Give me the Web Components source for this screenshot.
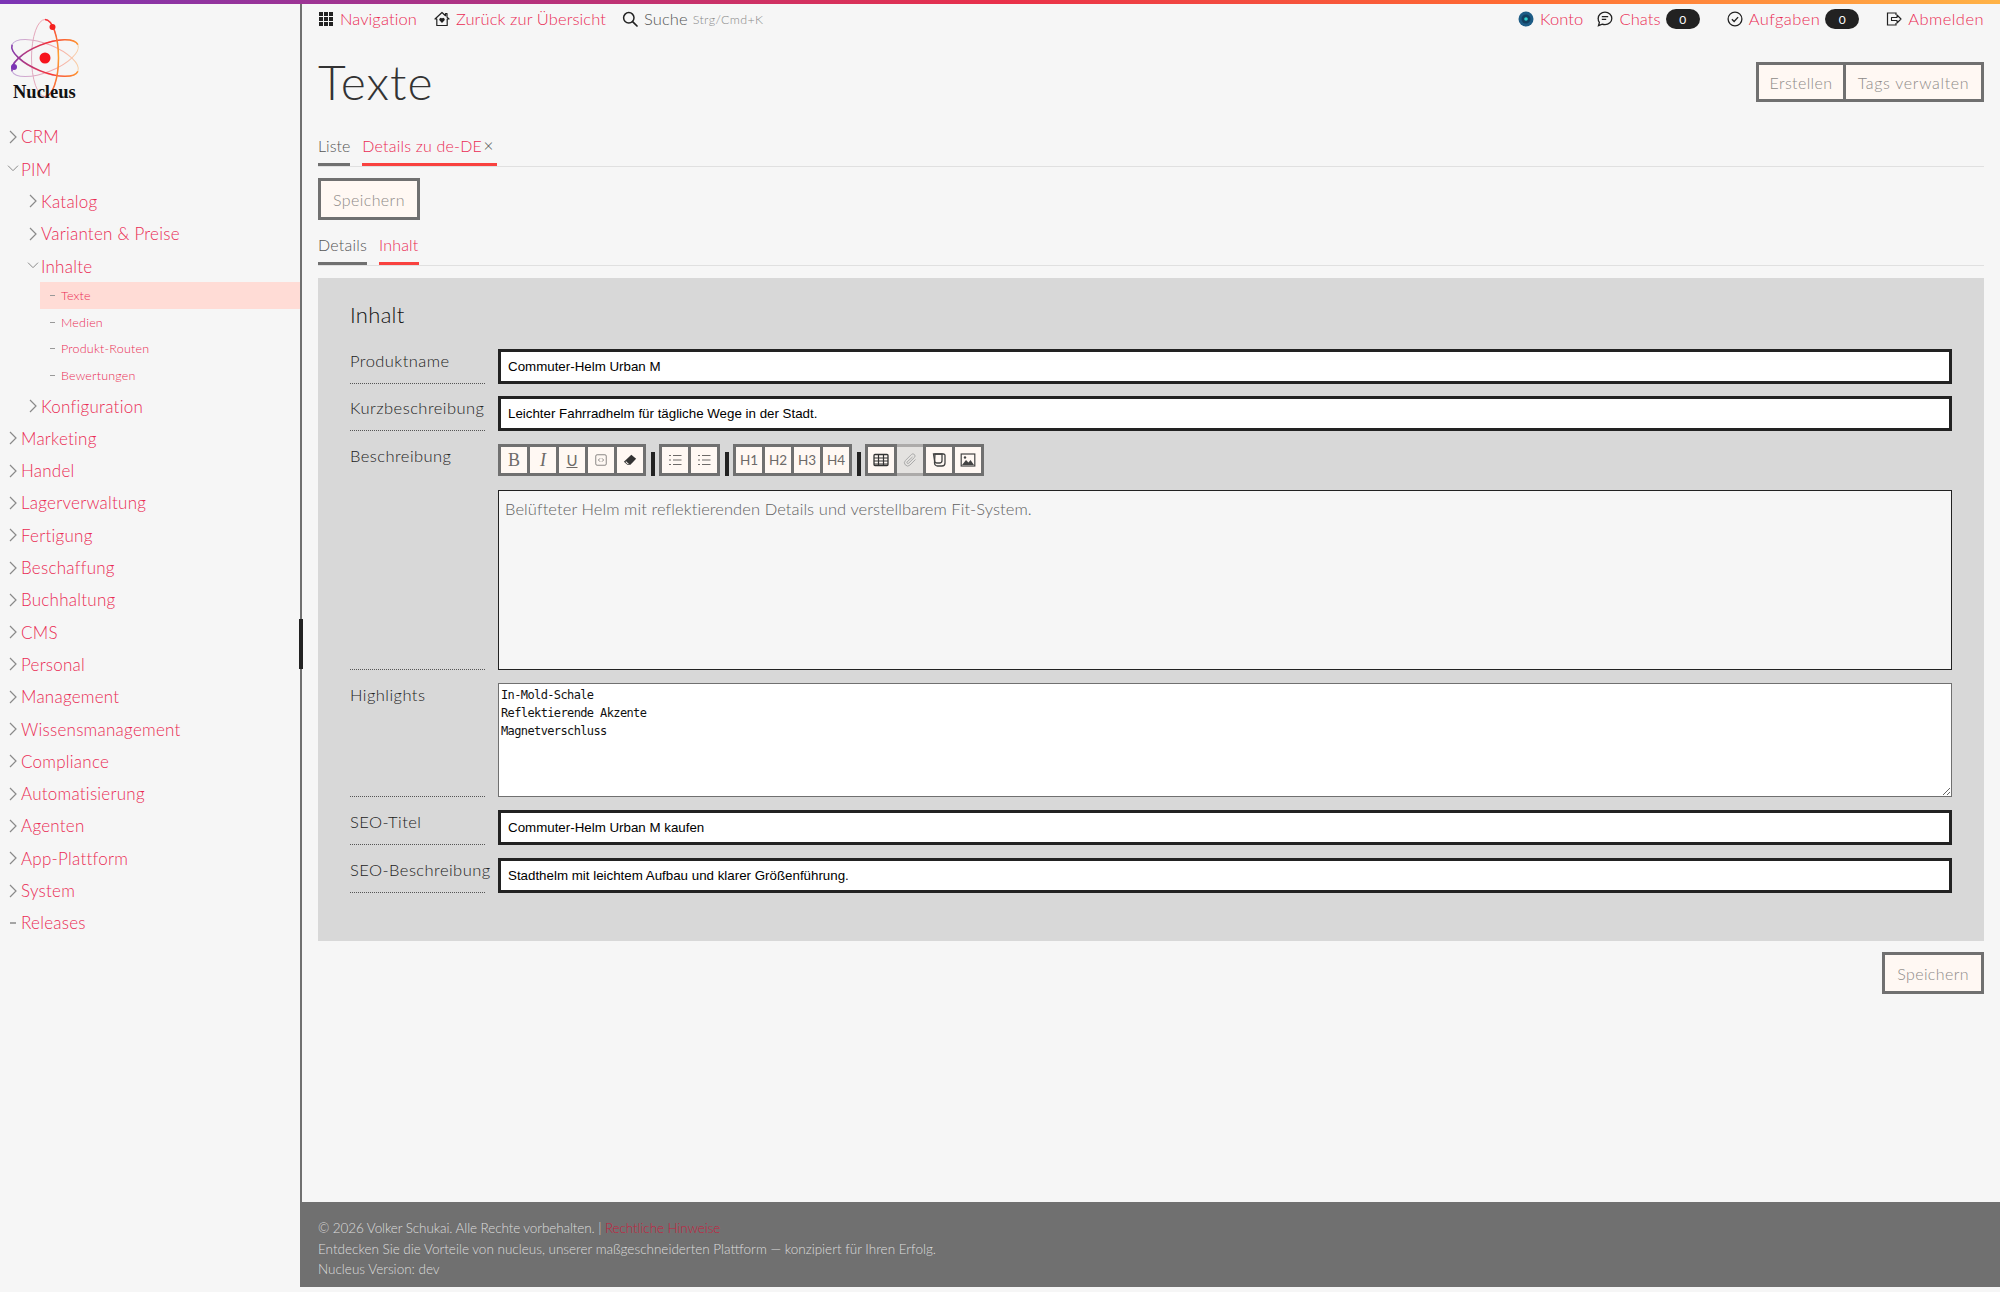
<!DOCTYPE html>
<html lang="de">
<head>
<meta charset="utf-8">
<title>Nucleus</title>
<style>
  html, body { margin: 0; height: 100%; }
  body { background: #f6f6f6; font-family: "Lato", "Liberation Sans", sans-serif; font-weight: 300; color: #222; }
</style>
</head>
<body>
<nc-app>
  <nc-sidebar slot="side"></nc-sidebar>
  <nc-topbar slot="top"></nc-topbar>
  <nc-content slot="main"></nc-content>
  <nc-footer slot="foot"></nc-footer>
</nc-app>
<script>
const RED = '#ea2b54';
const GREY = '#707070';
const svg = (d, size = 16) => `<svg width="${size}" height="${size}" viewBox="0 0 16 16" fill="currentColor">${d}</svg>`;
const ICON = {
  grid: '<path d="M1 1h4v4H1zM6 1h4v4H6zM11 1h4v4h-4zM1 6h4v4H1zM6 6h4v4H6zM11 6h4v4h-4zM1 11h4v4H1zM6 11h4v4H6zM11 11h4v4h-4z"/>',
  home: '<path d="M8 1.5 1 8h1.8v6.5h10.4V8H15l-2-1.9V2.5h-1.5v2.2z" fill="none" stroke="currentColor" stroke-width="1.2" stroke-linejoin="round"/><path d="M8 12 5.4 9.2a1.6 1.6 0 0 1 2.6-1.8 1.6 1.6 0 0 1 2.6 1.8z"/>',
  search: '<circle cx="6.8" cy="6.8" r="5.2" fill="none" stroke="currentColor" stroke-width="1.5"/><path d="m10.6 10.6 4.4 4.4" stroke="currentColor" stroke-width="1.7" stroke-linecap="round"/>',
  chat: '<path d="M8 1.2c3.8 0 6.8 2.7 6.8 6.2s-3 6.2-6.8 6.2c-1 0-2-.2-2.8-.5l-3.7 1.6.9-3.3a5.900 5.900 0 0 1-1.200-4C1.200 3.900 4.200 1.200 8 1.200z" fill="none" stroke="currentColor" stroke-width="1.3"/><path d="M4.800 5.600h6.400M4.800 8.300h4.400" stroke="currentColor" stroke-width="1.3"/>',
  check: '<circle cx="8" cy="8" r="6.900" fill="none" stroke="currentColor" stroke-width="1.3"/><path d="m4.900 8.300 2.200 2.200 4-4.400" fill="none" stroke="currentColor" stroke-width="1.4"/>',
  logout: '<path d="M10 4V2H1.500v12H10v-2" fill="none" stroke="currentColor" stroke-width="1.2"/><path d="M5.500 6.500H11V4l4 4-4 4V9.500H5.500z" fill="none" stroke="currentColor" stroke-width="1.1" stroke-linejoin="round"/>',
  bullet: '<path d="M6 3.500h8.500M6 8h8.500M6 12.500h8.500" stroke="currentColor" stroke-width="1" fill="none"/><path d="M2 3h2v1H2zM2 7.500h2v1H2zM2 12h2v1H2z"/>',
  table: '<rect x="1" y="2.500" width="14" height="11" rx="1" fill="none" stroke="currentColor" stroke-width="1.3"/><path d="M1 6h14M1 9h14M1 12h14M5.500 3v10M10.500 3v10" stroke="currentColor" stroke-width="1.2"/>',
  clip: '<path d="M13.500 7.500 8 13a3.200 3.200 0 0 1-4.600-4.500l6-6a2.100 2.100 0 0 1 3 3l-5.700 5.700a1 1 0 0 1-1.500-1.400L10.500 5" fill="none" stroke="currentColor" stroke-width="1"/>',
  snippet: '<path d="M4 2h8.500a1.500 1.500 0 0 1 1.500 1.500v7.500a3 3 0 0 1-3 3H6.500a3 3 0 0 1-3-3z" fill="none" stroke="currentColor" stroke-width="1.3"/><path d="M2.500 2H11v6.500a2.500 2.500 0 0 1-2.500 2.500H6a2.500 2.500 0 0 1-2.500-2.500z" fill="none" stroke="currentColor" stroke-width="1.3"/>',
  image: '<rect x="1.200" y="2" width="13.600" height="12" fill="none" stroke="currentColor" stroke-width="1.2"/><path d="m2 13 4-5 2.500 2.500L10.500 8 14 13z"/><circle cx="5" cy="5.500" r="1.200"/>',
  embed: '<rect x="2" y="2" width="12" height="12" rx="1.500" fill="none" stroke="currentColor" stroke-width=".9"/><path d="M7 6 5 8l2 2M9 6l2 2-2 2" fill="none" stroke="currentColor" stroke-width=".9"/>',
  eraser: '<path d="M9.500 2 15 6.500 8.500 13.500H5L1 10z"/><path d="M3.500 9.500 6.800 12.500H5.200L2.800 10.200z" fill="#fff8f3"/>'
};

class NcApp extends HTMLElement {
  constructor() {
    super();
    this.attachShadow({ mode: 'open' });
    this.shadowRoot.innerHTML = `
      <style>
        :host { display: block; height: 1292px; position: relative; overflow: hidden; }
        .stripe { height: 4px; background: linear-gradient(90deg, #7b35b5 0%, #e9304a 50%, #ff6a33 75%, #ffb347 100%); }
        .shell { display: grid; grid-template-columns: 300px 1fr; height: 1283px; }
        .left { overflow: hidden; }
        .right { display: flex; flex-direction: column; border-left: 2px solid ${GREY}; min-width: 0; }
        .grow { flex: 1; }
        .handle { position: absolute; left: 299px; top: 619px; width: 4px; height: 50px; background: #222; }
      </style>
      <div class="stripe"></div>
      <div class="shell">
        <div class="left"><slot name="side"></slot></div>
        <div class="right">
          <div class="grow"><slot name="top"></slot><slot name="main"></slot></div>
          <slot name="foot"></slot>
        </div>
      </div>
      <div class="handle"></div>`;
  }
}

class NcNavItem extends HTMLElement {
  constructor() {
    super();
    this.attachShadow({ mode: 'open' });
    const kind = this.getAttribute('kind') || 'closed';
    const mark = {
      closed: '<svg width="12" height="16" viewBox="0 0 12 16"><path d="m3 2 6 6-6 6" fill="none" stroke="#8a8a8a" stroke-width="1.2"/></svg>',
      open: '<svg width="12" height="10" viewBox="0 0 14 12"><path d="m1 2 6 6 6-6" fill="none" stroke="#8a8a8a" stroke-width="1.2"/></svg>',
      leaf: '<svg width="12" height="16" viewBox="0 0 12 16"><path d="M3 8h6" stroke="#8a8a8a" stroke-width="1.5"/></svg>'
    }[kind];
    this.shadowRoot.innerHTML = `
      <style>
        :host { display: block; }
        a { display: flex; align-items: center; height: 32.3px; color: ${RED}; font-size: 17px; letter-spacing: .24px; white-space: nowrap; }
        .m { width: 20px; display: flex; justify-content: center; margin-left: 3px; margin-right: -2px; }
      </style>
      <a><span class="m">${mark}</span><slot></slot></a>`;
  }
}

class NcNavSub extends HTMLElement {
  constructor() {
    super();
    this.attachShadow({ mode: 'open' });
    this.shadowRoot.innerHTML = `
      <style>
        :host { display: flex; align-items: center; height: 26.7px; margin-left: 40px; padding-left: 10px; color: ${RED}; font-size: 12.5px; letter-spacing: .2px; gap: 6px; }
        :host([active]) { background: #ffdcd6; }
        i { width: 5px; height: 1px; background: #999; }
      </style>
      <i></i><slot></slot>`;
  }
}

class NcSidebar extends HTMLElement {
  constructor() {
    super();
    this.attachShadow({ mode: 'open' });
    const top = (t, k) => `<nc-nav-item kind="${k || 'closed'}">${t}</nc-nav-item>`;
    const sub = (t, k) => `<div class="in">${top(t, k)}</div>`;
    const leaf = (t, a) => `<nc-nav-sub ${a ? 'active' : ''}>${t}</nc-nav-sub>`;
    this.shadowRoot.innerHTML = `
      <style>
        :host { display: block; }
        .logo { height: 105px; padding: 9px 0 0 9px; position: relative; box-sizing: border-box; }
        .logo svg { display: block; }
        .logo span { position: absolute; left: 13px; top: 78px; font: bold 18.5px "Liberation Serif", serif; color: #111; }
        .in { margin-left: 20px; }
        nav { padding-top: 11.7px; }
        .leafs { margin-bottom: 1px; }
      </style>
      <div class="logo">
        <svg width="72" height="86" viewBox="0 0 72 86" fill="none">
          <defs>
            <linearGradient id="g" gradientUnits="userSpaceOnUse" x1="0" x2="72" y1="0" y2="0"><stop offset="0" stop-color="#7b3bb5"/><stop offset=".55" stop-color="#f5303a"/><stop offset="1" stop-color="#ffa030"/></linearGradient>
            <linearGradient id="v" gradientUnits="userSpaceOnUse" x1="0" x2="0" y1="6" y2="84"><stop offset="0" stop-color="#f5303a"/><stop offset=".45" stop-color="#ffa030"/><stop offset="1" stop-color="#f5603a"/></linearGradient>
          </defs>
          <g stroke="url(#g)" stroke-width="1" opacity=".4">
            <ellipse cx="36" cy="45" rx="35.500" ry="14" transform="rotate(-22 36 45)"/>
            <ellipse cx="36" cy="45" rx="35.500" ry="14" transform="rotate(22 36 45)"/>
            <ellipse cx="36" cy="45" rx="13.500" ry="38.500"/>
          </g>
          <path d="M3.100 58.300A35.500 14 -22 0 1 68.900 31.700" stroke="url(#g)" stroke-width="1.500"/>
          <path d="M3.100 31.700A35.500 14 22 0 0 68.900 58.300" stroke="url(#g)" stroke-width="1.500"/>
          <path d="M36 6.500A13.500 38.500 0 0 1 36 83.500" stroke="url(#v)" stroke-width="1.500"/>
          <circle cx="36" cy="45" r="5.500" fill="#f7141c"/>
          <circle cx="43.500" cy="14" r="3" fill="#f4201f"/>
          <circle cx="5" cy="54" r="3" fill="#7b35b5"/>
        </svg>
        <span>Nucleus</span>
      </div>
      <nav>
        ${top('CRM')}${top('PIM', 'open')}
        ${sub('Katalog')}${sub('Varianten &amp; Preise')}${sub('Inhalte', 'open')}
        <div class="leafs">${leaf('Texte', true)}${leaf('Medien')}${leaf('Produkt-Routen')}${leaf('Bewertungen')}</div>
        ${sub('Konfiguration')}
        ${['Marketing','Handel','Lagerverwaltung','Fertigung','Beschaffung','Buchhaltung','CMS','Personal','Management','Wissensmanagement','Compliance','Automatisierung','Agenten','App-Plattform','System'].map(t => top(t)).join('')}
        ${top('Releases', 'leaf')}
      </nav>`;
  }
}

class NcTopbar extends HTMLElement {
  constructor() {
    super();
    this.attachShadow({ mode: 'open' });
    this.shadowRoot.innerHTML = `
      <style>
        :host { display: flex; align-items: center; height: 30px; padding: 0 16px; font-size: 16.5px; letter-spacing: .1px; white-space: nowrap; color: #222; }
        span.t { color: ${RED}; }
        .i { display: inline-flex; align-items: center; gap: 6px; }
        .hint { font-size: 12.5px; letter-spacing: .35px; color: #888; margin-left: 5px; }
        .s { flex: 1; }
        .b { background: #222; color: #fff; border-radius: 10px; width: 34px; height: 20px; display: inline-flex; align-items: center; justify-content: center; font: 12px "Lato", sans-serif; margin-left: -1px; letter-spacing: 0; }
        svg { display: block; }
      </style>
      <span class="i" style="margin-right:17px">${svg(ICON.grid)}<span class="t">Navigation</span></span>
      <span class="i" style="margin-right:16px">${svg(ICON.home)}<span class="t">Zurück zur Übersicht</span></span>
      <span class="i">${svg(ICON.search)}<span style="color:#555">Suche</span></span><span class="hint">Strg/Cmd+K</span>
      <span class="s"></span>
      <span class="i" style="margin-right:14px">
        <svg width="16" height="16" viewBox="0 0 16 16"><circle cx="8" cy="8" r="7.5" fill="#1d5c86"/><circle cx="8" cy="8" r="4.5" fill="#123f60"/><circle cx="8" cy="8" r="1.8" fill="#2fd3cf"/></svg>
        <span class="t">Konto</span></span>
      <span class="i" style="margin-right:27px">${svg(ICON.chat)}<span class="t">Chats</span><span class="b">0</span></span>
      <span class="i" style="margin-right:27px">${svg(ICON.check)}<span class="t" style="letter-spacing:.4px">Aufgaben</span><span class="b">0</span></span>
      <span class="i">${svg(ICON.logout)}<span class="t" style="letter-spacing:.45px">Abmelden</span></span>`;
  }
}

class NcTabs extends HTMLElement {
  constructor() {
    super();
    this.attachShadow({ mode: 'open' });
    this.shadowRoot.innerHTML = `
      <style>
        :host { display: flex; gap: 12px; border-bottom: 1px solid #e0e0e0; font-size: 16px; letter-spacing: .2px; }
      </style>
      <slot></slot>`;
  }
}

class NcTab extends HTMLElement {
  constructor() {
    super();
    this.attachShadow({ mode: 'open' });
    this.shadowRoot.innerHTML = `
      <style>
        :host { display: block; color: #555; border-bottom: 3px solid ${GREY}; padding-bottom: 6px; line-height: 22px; white-space: nowrap; }
        :host([active]) { color: ${RED}; border-bottom-color: #f9423f; }
      </style>
      <slot></slot>`;
  }
}

class NcButton extends HTMLElement {
  constructor() {
    super();
    this.attachShadow({ mode: 'open' });
    this.shadowRoot.innerHTML = `
      <style>
        :host { display: inline-flex; align-items: center; justify-content: center; box-sizing: border-box; height: 42px; padding: 0 12px; border: 3px solid ${GREY}; background: #fff8f3; color: #8e8a88; font-size: 16px; letter-spacing: .4px; white-space: nowrap; }
      </style>
      <slot></slot>`;
  }
}

class NcField extends HTMLElement {
  constructor() {
    super();
    this.attachShadow({ mode: 'open' });
    this.shadowRoot.innerHTML = `
      <style>
        :host { display: grid; grid-template-columns: 135px 1fr; column-gap: 13px; margin-bottom: 13px; }
        .l { border-bottom: 1px dotted #555; font-size: 16.5px; letter-spacing: .45px; color: #222; line-height: 24px; white-space: nowrap; }
      </style>
      <div class="l">${this.getAttribute('label')}</div>
      <div><slot></slot></div>`;
  }
}

class NcInput extends HTMLElement {
  constructor() {
    super();
    this.attachShadow({ mode: 'open' });
    this.shadowRoot.innerHTML = `
      <style>
        :host { display: flex; align-items: center; box-sizing: border-box; height: 35px; border: 3px solid #222; background: #fff; padding: 0 7px; font: 400 13.33px "Liberation Sans", sans-serif; color: #000; }
      </style>
      <slot></slot>`;
  }
}

class NcToolbar extends HTMLElement {
  constructor() {
    super();
    this.attachShadow({ mode: 'open' });
    const b = (c, st = '') => `<span class="b" style="${st}">${c}</span>`;
    const ic = (n, s = 16) => svg(ICON[n], s);
    const sep = '<i class="sep"></i>';
    this.shadowRoot.innerHTML = `
      <style>
        :host { display: flex; align-items: flex-end; height: 32px; color: #6d6a68; }
        .g { display: flex; gap: 3px; background: ${GREY}; padding: 3px; }
        .b { width: 26px; height: 26px; background: #fff8f3; display: flex; align-items: center; justify-content: center; font-size: 13.5px; font-weight: 400; color: #6d6a68; }
        .sep { width: 3.5px; height: 24px; background: #222; margin: 0 4.5px 0 5px; }
        svg { display: block; }
      </style>
      <div class="g">
        ${b('<span style="font:400 18px \'Liberation Serif\',serif">B</span>')}
        ${b('<span style="font:italic 400 18px \'Liberation Serif\',serif">I</span>')}
        ${b('<span style="font-size:15px;text-decoration:underline">U</span>')}
        ${b(ic('embed', 14))}
        ${b(ic('eraser', 14), 'color:#333')}
      </div>${sep}
      <div class="g">${b(ic('bullet'))}${b(ic('bullet'))}</div>${sep}
      <div class="g">${b('H1')}${b('H2')}${b('H3')}${b('H4')}</div>${sep}
      <div class="g">
        ${b(ic('table'), 'color:#333')}
        ${b(ic('clip'), 'background:#e4e2e0;color:#aaa;box-shadow:0 -3px 0 #acaaa9,0 3px 0 #acaaa9')}
        ${b(ic('snippet'), 'color:#444')}
        ${b(ic('image'), 'color:#444')}
      </div>`;
  }
}

class NcContent extends HTMLElement {
  constructor() {
    super();
    this.attachShadow({ mode: 'open' });
    this.shadowRoot.innerHTML = `
      <style>
        :host { display: block; padding: 0 16px; }
        .head { display: flex; justify-content: space-between; align-items: center; height: 96px; }
        h1 { margin: 0 0 2px; font-size: 48px; font-weight: 300; color: #333; letter-spacing: 1px; }
        .grp { display: flex; }
        .grp nc-button { height: 40px; }
        .grp nc-button + nc-button { margin-left: -3px; }
        .bar { margin: 11px 0 14px; display: flex; }
        .panel { background: #d8d8d8; margin-top: 12px; padding: 22px 32px 0; height: 663px; box-sizing: border-box; }
        h2 { margin: 0 0 19px; font-size: 22px; font-weight: 300; line-height: 30px; color: #111; letter-spacing: .3px; }
        .ta { box-sizing: border-box; width: 100%; height: 180px; margin-top: 14px; background: #f6f6f6; border: 1px solid #222; padding: 8px 6px; font-size: 16.5px; line-height: 20px; letter-spacing: .08px; color: #5f5f5f; }
        textarea { display: block; box-sizing: border-box; width: 100%; height: 114px; border: 1px solid ${GREY}; background: #fff; padding: 2px 2px; margin: 0; font: 12px/18px "DejaVu Sans Mono", monospace; letter-spacing: -.62px; color: #111; }
        .foot { display: flex; justify-content: flex-end; margin-top: 11px; }
        .x { font-size: 17px; color: #555; margin-left: -3px; padding-right: 3px; }
      </style>
      <div class="head">
        <h1>Texte</h1>
        <div class="grp"><nc-button style="width:90px">Erstellen</nc-button><nc-button style="width:141px;letter-spacing:.7px">Tags verwalten</nc-button></div>
      </div>
      <nc-tabs style="margin-top:5px"><nc-tab style="letter-spacing:0">Liste</nc-tab><nc-tab active>Details zu de-DE <span class="x">×</span></nc-tab></nc-tabs>
      <div class="bar"><nc-button>Speichern</nc-button></div>
      <nc-tabs><nc-tab>Details</nc-tab><nc-tab active>Inhalt</nc-tab></nc-tabs>
      <div class="panel">
        <h2>Inhalt</h2>
        <nc-field label="Produktname" style="margin-bottom:12px"><nc-input>Commuter-Helm Urban M</nc-input></nc-field>
        <nc-field label="Kurzbeschreibung"><nc-input>Leichter Fahrradhelm für tägliche Wege in der Stadt.</nc-input></nc-field>
        <nc-field label="Beschreibung">
          <nc-toolbar></nc-toolbar>
          <div class="ta">Belüfteter Helm mit reflektierenden Details und verstellbarem Fit-System.</div>
        </nc-field>
        <nc-field label="Highlights"><textarea>In-Mold-Schale
Reflektierende Akzente
Magnetverschluss</textarea></nc-field>
        <nc-field label="SEO-Titel"><nc-input>Commuter-Helm Urban M kaufen</nc-input></nc-field>
        <nc-field label="SEO-Beschreibung"><nc-input>Stadthelm mit leichtem Aufbau und klarer Größenführung.</nc-input></nc-field>
      </div>
      <div class="foot"><nc-button>Speichern</nc-button></div>`;
  }
}

class NcFooter extends HTMLElement {
  constructor() {
    super();
    this.attachShadow({ mode: 'open' });
    this.shadowRoot.innerHTML = `
      <style>
        :host { display: block; box-sizing: border-box; height: 85px; background: ${GREY}; color: #ddd; padding: 16px 16px 0; font-size: 13.5px; line-height: 20.5px; white-space: nowrap; }
        a { color: #c5203f; }
      </style>
      <div style="letter-spacing:-.1px">© 2026 Volker Schukai. Alle Rechte vorbehalten. | <a>Rechtliche Hinweise</a></div>
      <div>Entdecken Sie die Vorteile von nucleus, unserer maßgeschneiderten Plattform — konzipiert für Ihren Erfolg.</div>
      <div>Nucleus Version: dev</div>`;
  }
}

customElements.define('nc-app', NcApp);
customElements.define('nc-nav-item', NcNavItem);
customElements.define('nc-nav-sub', NcNavSub);
customElements.define('nc-sidebar', NcSidebar);
customElements.define('nc-topbar', NcTopbar);
customElements.define('nc-tabs', NcTabs);
customElements.define('nc-tab', NcTab);
customElements.define('nc-button', NcButton);
customElements.define('nc-field', NcField);
customElements.define('nc-input', NcInput);
customElements.define('nc-toolbar', NcToolbar);
customElements.define('nc-content', NcContent);
customElements.define('nc-footer', NcFooter);
</script>
</body>
</html>
